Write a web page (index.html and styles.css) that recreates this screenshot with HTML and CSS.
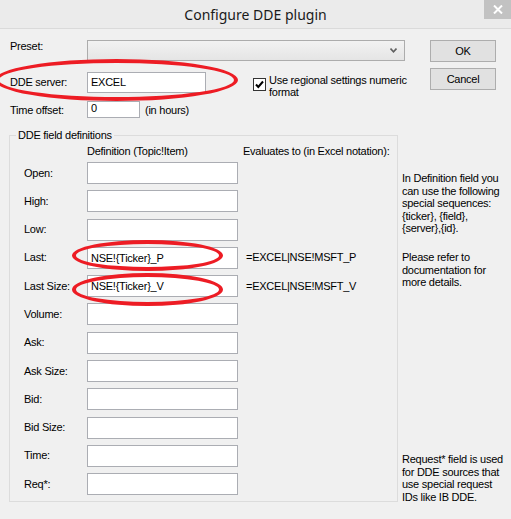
FILE: index.html
```html
<!DOCTYPE html>
<html>
<head>
<meta charset="utf-8">
<link rel="stylesheet" href="styles.css">
</head>
<body>
<div class="window">
  <div class="titlebar">
    <span class="title">Configure DDE plugin</span>
    <span class="close"><svg width="10" height="9" viewBox="0 0 10 9"><path d="M1 0.5 L9 8.5 M9 0.5 L1 8.5" stroke="#fff" stroke-width="2"/></svg></span>
  </div>
  <div class="body">
    <div class="top">
      <div class="top-left">
        <div class="row row-preset">
          <span class="lbl">Preset:</span>
          <div class="combo"><svg class="chev" width="7" height="5" viewBox="0 0 7 5"><path d="M0.5 0.5 L3.5 3.8 L6.5 0.5" stroke="#606060" stroke-width="1.6" fill="none"/></svg></div>
        </div>
        <div class="row row-server">
          <span class="lbl">DDE server:</span>
          <div class="edit edit-server">EXCEL</div>
          <div class="check">
            <span class="box"><svg width="11" height="11" viewBox="0 0 11 11"><path d="M2 5.5 L4.3 8 L9 2.5" stroke="#000" stroke-width="2" fill="none"/></svg></span>
            <span class="check-text">Use regional settings numeric<br>format</span>
          </div>
        </div>
        <div class="row row-offset">
          <span class="lbl">Time offset:</span>
          <div class="edit edit-offset">0</div>
          <span class="unit">(in hours)</span>
        </div>
      </div>
      <div class="buttons">
        <div class="btn">OK</div>
        <div class="btn">Cancel</div>
      </div>
    </div>
    <div class="main">
      <fieldset class="group">
        <legend>DDE field definitions</legend>
        <div class="fields">
          <span></span><span class="hdr">Definition (Topic!Item)</span><span class="hdr hdr-eval">Evaluates to (in Excel notation):</span>
        </div>
        <div class="fields rows">
          <span class="flbl">Open:</span><div class="edit fedit"></div><span class="eval"></span>
          <span class="flbl">High:</span><div class="edit fedit"></div><span class="eval"></span>
          <span class="flbl">Low:</span><div class="edit fedit"></div><span class="eval"></span>
          <span class="flbl">Last:</span><div class="edit fedit">NSE!{Ticker}_P</div><span class="eval">=EXCEL|NSE!MSFT_P</span>
          <span class="flbl">Last Size:</span><div class="edit fedit">NSE!{Ticker}_V</div><span class="eval">=EXCEL|NSE!MSFT_V</span>
          <span class="flbl">Volume:</span><div class="edit fedit"></div><span class="eval"></span>
          <span class="flbl">Ask:</span><div class="edit fedit"></div><span class="eval"></span>
          <span class="flbl">Ask Size:</span><div class="edit fedit"></div><span class="eval"></span>
          <span class="flbl">Bid:</span><div class="edit fedit"></div><span class="eval"></span>
          <span class="flbl">Bid Size:</span><div class="edit fedit"></div><span class="eval"></span>
          <span class="flbl">Time:</span><div class="edit fedit"></div><span class="eval"></span>
          <span class="flbl">Req*:</span><div class="edit fedit"></div><span class="eval"></span>
        </div>
      </fieldset>
      <div class="notes">
        <p class="note note1">In Definition field you<br>can use the following<br>special sequences:<br>{ticker}, {field},<br>{server},{id}.</p>
        <p class="note note2">Please refer to<br>documentation for<br>more details.</p>
        <p class="note note3">Request* field is used<br>for DDE sources that<br>use special request<br>IDs like IB DDE.</p>
      </div>
    </div>
  </div>
  <div class="ring ring-server"></div>
  <div class="ring ring-last"></div>
  <div class="ring ring-lastsize"></div>
</div>
</body>
</html>
```
FILE: styles.css
```css
html, body {
  margin: 0;
  padding: 0;
}
body {
  background: #f0f0f0;
  font-family: "Liberation Sans", Arial, sans-serif;
  font-size: 11px;
  letter-spacing: -0.25px;
  line-height: 13px;
  color: #000;
}
.window {
  position: relative;
  width: 511px;
  height: 519px;
  overflow: hidden;
}
.titlebar {
  position: relative;
  height: 28px;
  background: #ebebeb;
  border-bottom: 1px solid #dadada;
  display: flex;
  align-items: center;
  justify-content: center;
}
.title {
  font-family: "Noto Sans", "Open Sans", sans-serif;
  font-size: 14px;
  letter-spacing: 0;
  color: #1a1a1a;
}
.close {
  position: absolute;
  right: 0;
  top: 0;
  width: 27px;
  height: 19px;
  background: #c2c2c2;
  display: flex;
  align-items: center;
  justify-content: center;
}
.body {
  padding: 11px 0 0 10px;
}
.top {
  display: flex;
}
.top-left {
  width: 420px;
}
.row {
  display: flex;
}
.lbl {
  width: 77px;
  flex: none;
}
.row-preset {
  height: 21px;
  align-items: flex-start;
}
.combo {
  position: relative;
  width: 316px;
  height: 19px;
  border: 1px solid #acacac;
  background: linear-gradient(#f2f2f2, #e5e5e5);
}
.chev {
  position: absolute;
  right: 7px;
  top: 7px;
}
.row-server {
  margin-top: 11px;
  height: 21px;
  align-items: center;
}
.edit {
  background: #fff;
  border: 1px solid #abadb3;
  box-sizing: border-box;
  padding-left: 3px;
  white-space: nowrap;
}
.edit-server {
  width: 119px;
  height: 21px;
  line-height: 19px;
}
.check {
  display: flex;
  align-self: flex-start;
  margin-top: 2px;
  margin-left: 47px;
}
.box {
  width: 11px;
  height: 11px;
  border: 1px solid #333;
  background: #fff;
  margin-top: 4px;
  margin-right: 3px;
  display: flex;
}
.check-text {
  line-height: 12px;
  white-space: nowrap;
}
.row-offset {
  margin-top: 8px;
  height: 17px;
  align-items: flex-start;
}
.row-offset .lbl {
  margin-top: 3px;
}
.edit-offset {
  width: 53px;
  height: 17px;
  line-height: 13px;
}
.unit {
  margin-left: 5px;
  margin-top: 3px;
}
.buttons {
  display: flex;
  flex-direction: column;
  gap: 6px;
}
.btn {
  width: 66px;
  height: 22px;
  box-sizing: border-box;
  border: 1px solid #adadad;
  background: #e1e1e1;
  display: flex;
  align-items: center;
  justify-content: center;
}
.main {
  display: flex;
  margin-top: 11px;
}
.group {
  margin: 0 0 0 -1px;
  padding: 0;
  width: 387px;
  height: 371px;
  border: 1px solid #dcdcdc;
  min-width: 0;
}
.group legend {
  margin-left: 6px;
  padding: 0 2px;
}
.fields {
  display: grid;
  grid-template-columns: 63px 151px 1fr;
  padding-left: 14px;
}
.hdr {
  margin-top: 3px;
  white-space: nowrap;
}
.hdr-eval {
  margin-left: 5px;
}
.rows {
  margin-top: 4px;
  grid-auto-rows: 22px;
  row-gap: 6.3px;
  align-items: center;
}
.flbl {
  white-space: nowrap;
}
.fedit {
  height: 22px;
  line-height: 20px;
}
.eval {
  margin-left: 8px;
  white-space: nowrap;
}
.notes {
  margin-left: 4px;
  width: 109px;
  display: flex;
  flex-direction: column;
}
.note {
  margin: 0;
  line-height: 12.5px;
  white-space: nowrap;
}
.note1 { margin-top: 43px; }
.note2 { margin-top: 16.5px; }
.note3 { margin-top: 164.5px; }
.ring {
  position: absolute;
  border: 4px solid #ed1c24;
  border-radius: 50%;
  box-sizing: border-box;
}
.ring-server {
  left: -5px;
  top: 59px;
  width: 243px;
  height: 42px;
}
.ring-last {
  left: 72px;
  top: 240px;
  width: 151px;
  height: 31px;
}
.ring-lastsize {
  left: 72px;
  top: 273px;
  width: 151px;
  height: 33px;
}
```
